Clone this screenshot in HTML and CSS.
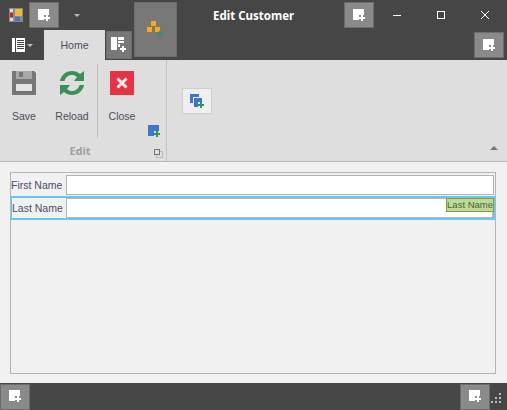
FILE: index.html
```html
<!DOCTYPE html>
<html lang="en">
<head>
    <meta charset="UTF-8">
    <meta name="viewport" content="width=device-width, initial-scale=1.0">
    <title>Edit Customer</title>
    <link rel="stylesheet" href="styles.css">
</head>
<body>
    <svg class="defs" width="0" height="0">
        <symbol id="add-white" viewBox="0 0 13 13">
            <path fill="#fff" d="M0 0H11V6H6V11H0Z"/>
            <path fill="#fff" d="M8 6H10V8H12V10H10V12H8V10H6V8H8Z"/>
        </symbol>
    </svg>

    <div class="window">
        <div class="titlebar">
            <svg class="app-icon" width="14" height="14" viewBox="0 0 14 14">
                <rect width="14" height="14" fill="#8a8a8a"/>
                <rect x="1" y="1" width="3" height="3" fill="#ddd"/>
                <rect x="1" y="5" width="3" height="4" fill="#d42020"/>
                <rect x="1" y="10" width="3" height="3" fill="#ddd"/>
                <rect x="6" y="1" width="7" height="7" fill="#f2b632"/>
                <rect x="6" y="9" width="5" height="4" fill="#3b78d0"/>
            </svg>
            <button class="ph-btn qat-btn"><svg class="add-icon"><use href="#add-white"/></svg></button>
            <span class="caret qat-caret"></span>
            <div class="title">Edit Customer</div>
            <button class="ph-btn title-btn"><svg class="add-icon"><use href="#add-white"/></svg></button>
            <div class="win-controls">
                <svg width="44" height="12" viewBox="0 0 44 12"><path d="M17 6.500H25" stroke="#fff" fill="none"/></svg>
                <svg width="44" height="12" viewBox="0 0 44 12"><rect x="17.500" y="2.500" width="7" height="7" stroke="#fff" fill="none"/></svg>
                <svg width="43" height="12" viewBox="0 0 43 12"><path d="M17 2L25 10M25 2L17 10" stroke="#fff" fill="none"/></svg>
            </div>
        </div>

        <div class="tabrow">
            <div class="app-menu">
                <svg width="13" height="14" viewBox="0 0 13 14">
                    <rect width="13" height="14" fill="#fff"/>
                    <path d="M3.500 0V14" stroke="#464646"/>
                    <path d="M5 2.500H12M5 4.500H12M5 6.500H12M5 8.500H12M5 10.500H12" stroke="#464646"/>
                </svg>
                <span class="caret"></span>
            </div>
            <div class="tab">Home</div>
            <button class="ph-btn tab-btn">
                <svg width="16" height="16" viewBox="0 0 16 16">
                    <path fill="#fff" d="M0 0H6V13H0ZM7 0H13V3H7ZM7 4H13V6H7ZM7 7H9V10H7Z"/>
                    <path fill="#fff" d="M11 9H13V11H15V13H13V15H11V13H9V11H11Z"/>
                </svg>
            </button>
            <button class="ph-btn ribbon-end-btn"><svg class="add-icon"><use href="#add-white"/></svg></button>
        </div>

        <button class="ph-btn big-btn">
            <svg width="17" height="17" viewBox="0 0 17 17">
                <rect x="4" y="0" width="5" height="5" fill="#fba919"/>
                <rect x="0" y="6" width="5" height="5" fill="#fba919"/>
                <rect x="8" y="6" width="5" height="5" fill="#fba919"/>
                <path fill="#3b8f5b" d="M12 10H14V12H16V14H14V16H12V14H10V12H12Z"/>
            </svg>
        </button>

        <div class="ribbon">
            <div class="group">
                <div class="group-items">
                    <div class="large-item item-save">
                        <svg width="24" height="24" viewBox="0 0 24 24">
                            <path fill="#777" d="M0 0H22L24 2V24H0Z"/>
                            <rect x="4" y="0" width="16" height="8" fill="#a8a8a8"/>
                            <rect x="7" y="1" width="4" height="5" fill="#777"/>
                            <rect x="4" y="13" width="16" height="7" fill="#e4e4e4"/>
                        </svg>
                        <span>Save</span>
                    </div>
                    <div class="large-item item-reload">
                        <svg width="24" height="24" viewBox="0 0 24 24">
                            <path fill="#3b8f5b" d="M0 10C1 4 6 0 12 0C15 0 18 1 20 3L24 0V10H14L17 6C15 4.500 14 4 12 4C8 4 5.500 6.500 4.500 10Z"/>
                            <path fill="#3b8f5b" d="M24 14C23 20 18 24 12 24C9 24 6 23 4 21L0 24V14H10L7 18C9 19.500 10 20 12 20C16 20 18.500 17.500 19.500 14Z"/>
                        </svg>
                        <span>Reload</span>
                    </div>
                    <div class="item-sep"></div>
                    <div class="large-item item-close">
                        <svg width="24" height="24" viewBox="0 0 24 24">
                            <rect width="24" height="24" fill="#e83345"/>
                            <path d="M7.500 7.500L16.500 16.500M16.500 7.500L7.500 16.500" stroke="#eee" stroke-width="3" fill="none"/>
                        </svg>
                        <span>Close</span>
                    </div>
                    <svg class="item-add" width="13" height="13" viewBox="0 0 13 13">
                        <path fill="#3b78c8" d="M0 0H11V6H6V11H0Z"/>
                        <path fill="#3b8f5b" d="M8 6H10V8H12V10H10V12H8V10H6V8H8Z"/>
                    </svg>
                </div>
                <div class="group-caption">
                    <span class="group-name">Edit</span>
                    <svg class="launcher" width="9" height="9" viewBox="0 0 9 9">
                        <rect x="2.500" y="2.500" width="6" height="6" fill="none" stroke="#bbb"/>
                        <rect x="0.500" y="0.500" width="5" height="5" fill="#dedede" stroke="#777"/>
                    </svg>
                </div>
            </div>
            <div class="group-empty">
                <button class="small-btn">
                    <svg width="14" height="14" viewBox="0 0 14 14">
                        <path fill="#3b78c8" d="M0 0H9V3H3V9H0Z"/>
                        <path fill="#3b78c8" d="M4 4H12V8H8V13H4Z"/>
                        <path fill="#3b8f5b" d="M10 8H12V10H14V12H12V14H10V12H8V10H10Z"/>
                    </svg>
                </button>
                <span class="collapse-arrow"></span>
            </div>
        </div>

        <div class="content">
            <div class="form-frame">
                <div class="field-row">
                    <label class="field-label">First Name</label>
                    <input class="field-input" type="text">
                </div>
                <div class="field-row field-row-active">
                    <label class="field-label">Last Name</label>
                    <input class="field-input" type="text">
                    <span class="name-tag">Last Name</span>
                </div>
            </div>
        </div>

        <div class="statusbar">
            <button class="ph-btn status-btn"><svg class="add-icon"><use href="#add-white"/></svg></button>
            <button class="ph-btn status-btn status-btn-right"><svg class="add-icon"><use href="#add-white"/></svg></button>
            <svg class="grip" width="11" height="11" viewBox="0 0 11 11">
                <path fill="#bbb" d="M8 0h2v2H8zM4 4h2v2H4zM8 4h2v2H8zM0 8h2v2H0zM4 8h2v2H4zM8 8h2v2H8z"/>
            </svg>
        </div>
    </div>
</body>
</html>
```

FILE: styles.css
```css
body {
    margin: 0;
    font-family: "Liberation Sans", Arial, sans-serif;
    font-size: 10.5px;
    background-color: #f1f1f1;
}
.defs {
    position: absolute;
}
.window {
    position: relative;
    display: flex;
    flex-direction: column;
    width: 507px;
    height: 410px;
    overflow: hidden;
}
button {
    margin: 0;
    padding: 0;
    font: inherit;
}

/* placeholder buttons on dark bars */
.ph-btn {
    display: flex;
    flex-shrink: 0;
    justify-content: center;
    align-items: center;
    box-sizing: border-box;
    border: 1px solid #6c6c6c;
    background: #8a8a8a;
}
.add-icon {
    width: 13px;
    height: 13px;
}
.caret {
    width: 0;
    height: 0;
    border-left: 3px solid transparent;
    border-right: 3px solid transparent;
    border-top: 3px solid #bbb;
}

/* title bar */
.titlebar {
    display: flex;
    align-items: center;
    height: 30px;
    padding-left: 9px;
    background: #464646;
}
.app-icon {
    margin-right: 6px;
}
.qat-btn {
    width: 30px;
    height: 26px;
}
.qat-caret {
    margin-left: 15px;
}
.title {
    box-sizing: border-box;
    width: 264px;
    padding-left: 133px;
    color: #fff;
    font-family: "Noto Sans", Arial, sans-serif;
    font-weight: bold;
    font-size: 11.5px;
    white-space: nowrap;
}
.title-btn {
    width: 30px;
    height: 26px;
}
.win-controls {
    display: flex;
    margin-left: 2px;
}

/* tab row */
.tabrow {
    display: flex;
    height: 30px;
    background: #464646;
}
.app-menu {
    display: flex;
    align-items: center;
    gap: 2px;
    width: 32px;
    padding-left: 12px;
}
.tab {
    width: 61px;
    background: #dedede;
    color: #4c4c68;
    text-align: center;
    line-height: 30px;
}
.tab-btn {
    width: 26px;
    height: 28px;
    margin: 1px 0 0 1px;
    background: #787878;
}
.ribbon-end-btn {
    width: 30px;
    height: 26px;
    margin: 2px 0 0 342px;
}
.big-btn {
    position: absolute;
    left: 134px;
    top: 2px;
    width: 43px;
    height: 55px;
    background: #787878;
}

/* ribbon */
.ribbon {
    display: flex;
    height: 101px;
    background: #dedede;
    border-bottom: 1px solid #b9b9b9;
}
.group {
    display: flex;
    flex-direction: column;
    width: 166px;
    border-right: 1px solid #c4c4c4;
}
.group-items {
    display: flex;
    height: 78px;
    padding: 4px 0 0 2px;
    box-sizing: border-box;
}
.large-item {
    display: flex;
    flex-direction: column;
    align-items: center;
    gap: 15px;
    padding-top: 7px;
    color: #4c4c5c;
}
.item-save {
    width: 44px;
}
.item-reload {
    width: 50px;
    margin-left: 1px;
}
.item-sep {
    width: 1px;
    height: 74px;
    background: #c0c0c0;
}
.item-close {
    width: 48px;
}
.item-add {
    margin: 61px 0 0 2px;
}
.group-caption {
    position: relative;
    flex: 1;
    text-align: center;
    padding-right: 6px;
}
.group-name {
    color: #a0a0a0;
    font-family: "Noto Sans", Arial, sans-serif;
    font-weight: bold;
    font-size: 11px;
    line-height: 26px;
}
.launcher {
    position: absolute;
    right: 3px;
    top: 11px;
}
.group-empty {
    position: relative;
    flex: 1;
    padding: 28px 0 0 15px;
}
.small-btn {
    display: flex;
    justify-content: center;
    align-items: center;
    width: 30px;
    height: 26px;
    box-sizing: border-box;
    border: 1px solid #cfcfcf;
    background: #efefef;
}
.collapse-arrow {
    position: absolute;
    right: 9px;
    bottom: 11px;
    width: 0;
    height: 0;
    border-left: 4px solid transparent;
    border-right: 4px solid transparent;
    border-bottom: 4px solid #777;
}

/* form area */
.content {
    flex: 1;
    padding: 10px 11px 9px 10px;
    background: #f1f1f1;
    min-height: 0;
}
.form-frame {
    box-sizing: border-box;
    height: 100%;
    border: 1px solid #b4b4b4;
}
.field-row {
    position: relative;
    display: flex;
    align-items: center;
    box-sizing: border-box;
    height: 23px;
}
.field-label {
    width: 55px;
    color: #4c4c68;
    white-space: nowrap;
}
.field-input {
    flex: 1;
    box-sizing: border-box;
    height: 20px;
    min-width: 0;
    margin: 0;
    margin-right: 1px;
    padding: 0;
    border: 1px solid #b4b4b4;
    background: #fff;
    outline: none;
}
.field-row-active {
    height: 24px;
    border: 1px solid #66c8ee;
    border-width: 2px 2px 2px 1px;
}
.field-row-active .field-label {
    width: 54px;
}
.field-row-active .field-input {
    margin-right: 0;
}
.name-tag {
    position: absolute;
    right: -1px;
    top: 0;
    box-sizing: border-box;
    height: 14px;
    padding: 0;
    border: 1px solid #7f9e55;
    background: #bfdc8e;
    color: #4c5c50;
    font-size: 9.5px;
    line-height: 12px;
    white-space: nowrap;
}

/* status bar */
.statusbar {
    position: relative;
    display: flex;
    justify-content: space-between;
    align-items: center;
    height: 27px;
    padding: 0 17px 0 0;
    background: #464646;
}
.status-btn {
    width: 30px;
    height: 26px;
}
.grip {
    position: absolute;
    right: 5px;
    bottom: 6px;
}
```
